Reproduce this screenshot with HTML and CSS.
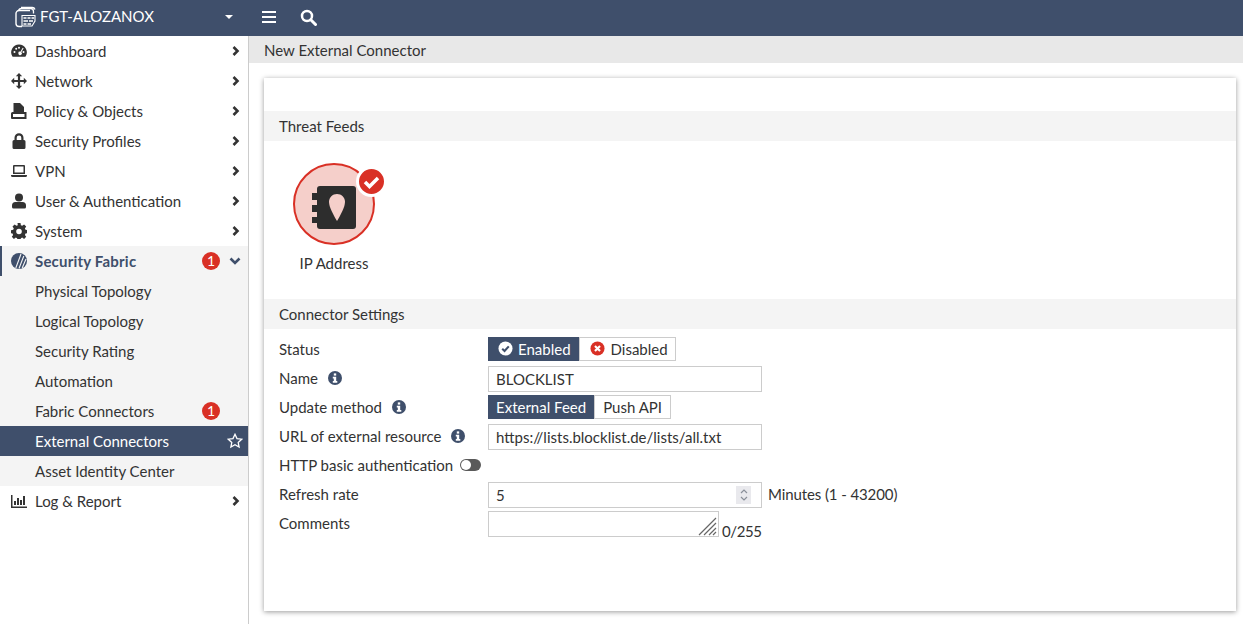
FILE: index.html
```html
<!DOCTYPE html>
<html lang="en">
<head>
  <meta charset="UTF-8" />
  <title>FGT-ALOZANOX – New External Connector</title>
  <link rel="stylesheet" href="styles.css">
</head>
<body>
  <header class="topbar">
    <div class="brand">
      <svg class="brand-logo" width="22" height="22" viewBox="0 0 22 22" fill="none" stroke="#fff">
        <path d="M6 1.500h11a3 3 0 0 1 3 2" stroke-width="1.300"/>
        <path d="M3.500 5a3 3 0 0 1 3-2.500h9a3 3 0 0 1 3 3v2" stroke-width="1.300"/>
        <path d="M7 20.500H4a3 3 0 0 1-3-3V7.500a3 3 0 0 1 3-3h11" stroke-width="1.400"/>
        <path d="M7 9.500h13v5.500l-3 5H7z" stroke-width="1.100"/>
        <path d="M8.500 12h3M12.500 12h3M16.500 12h2.500M8.500 15h4.500M14 15h4M8.500 18h3M12.500 18h3.500" stroke-width="1.500"/>
      </svg>
      <span class="brand-name">FGT-ALOZANOX</span>
      <span class="caret"></span>
    </div>
    <svg class="top-icon" width="16" height="14" viewBox="0 0 16 14" fill="#fff"><rect y="1" width="14" height="2"/><rect y="6" width="14" height="2"/><rect y="11" width="14" height="2"/></svg>
    <svg class="top-icon search" width="17" height="17" viewBox="0 0 17 17" fill="none" stroke="#fff"><circle cx="7" cy="7" r="5" stroke-width="2.500"/><path d="M10.800 10.800l4.700 4.700" stroke-width="3" stroke-linecap="round"/></svg>
  </header>

  <div class="shell">
    <nav class="sidebar">
      <a class="nav-item">
        <svg class="nav-icon" viewBox="0 0 16 16"><path fill="#333" fill-rule="evenodd" d="M8 1.500a7.800 7.800 0 0 0-6.700 11.800q.3.500.9.500h11.600q.6 0 .9-.5A7.800 7.800 0 0 0 8 1.500zM3.500 8a1 1 0 1 1 0 2 1 1 0 0 1 0-2zm1.700-3.300a1 1 0 1 1 0 2 1 1 0 0 1 0-2zm2.800-1a1 1 0 1 1 0 2 1 1 0 0 1 0-2zm3.700 1.100l.9.500-2.300 3.900a1.700 1.700 0 1 1-.9-.5zM12.500 8a1 1 0 1 1 0 2 1 1 0 0 1 0-2z"/></svg>
        <span class="nav-label">Dashboard</span>
        <svg class="chev" viewBox="0 0 10 12"><path d="M2.500 2l4 4-4 4"/></svg>
      </a>
      <a class="nav-item">
        <svg class="nav-icon" viewBox="0 0 16 16"><path fill="#333" d="M8 0l3.200 3.200H9.100v3.700h3.700V4.800L16 8l-3.200 3.200V9.100H9.100v3.700h2.100L8 16l-3.200-3.200h2.100V9.100H3.200v2.100L0 8l3.200-3.200v2.100h3.700V3.200H4.800z"/></svg>
        <span class="nav-label">Network</span>
        <svg class="chev" viewBox="0 0 10 12"><path d="M2.500 2l4 4-4 4"/></svg>
      </a>
      <a class="nav-item">
        <svg class="nav-icon" viewBox="0 0 16 16"><path fill="#333" d="M2.500 0H9l4 4v5H2.500z"/><path fill="#333" fill-rule="evenodd" d="M1.500 9H15.500v7H1a1 1 0 0 1-1-1v-4.500A1.500 1.500 0 0 1 1.500 9zM2 11v3h11.500v-3z"/></svg>
        <span class="nav-label">Policy &amp; Objects</span>
        <svg class="chev" viewBox="0 0 10 12"><path d="M2.500 2l4 4-4 4"/></svg>
      </a>
      <a class="nav-item">
        <svg class="nav-icon" viewBox="0 0 16 16"><path fill="#333" d="M3.500 7V4.800a4.500 4.500 0 0 1 9 0V7h.500A1.500 1.500 0 0 1 14.500 8.500v6A1.500 1.500 0 0 1 13 16H3a1.500 1.500 0 0 1-1.500-1.500v-6A1.500 1.500 0 0 1 3 7zm2.200 0h4.600V4.800a2.300 2.300 0 0 0-4.600 0z"/></svg>
        <span class="nav-label">Security Profiles</span>
        <svg class="chev" viewBox="0 0 10 12"><path d="M2.500 2l4 4-4 4"/></svg>
      </a>
      <a class="nav-item">
        <svg class="nav-icon" viewBox="0 0 16 16"><path fill="#333" fill-rule="evenodd" d="M3 2h10a1 1 0 0 1 1 1v8H2V3a1 1 0 0 1 1-1zm.500 1.500v6h9v-6z"/><path fill="#333" d="M0 12h16v.500A1.500 1.500 0 0 1 14.500 14h-13A1.500 1.500 0 0 1 0 12.500z"/></svg>
        <span class="nav-label">VPN</span>
        <svg class="chev" viewBox="0 0 10 12"><path d="M2.500 2l4 4-4 4"/></svg>
      </a>
      <a class="nav-item">
        <svg class="nav-icon" viewBox="0 0 16 16"><circle fill="#333" cx="8" cy="4.500" r="4"/><path fill="#333" d="M4.500 9h7A3.500 3.500 0 0 1 15 12.500V14a1.500 1.500 0 0 1-1.500 1.500h-11A1.500 1.500 0 0 1 1 14v-1.500A3.500 3.500 0 0 1 4.500 9z"/></svg>
        <span class="nav-label">User &amp; Authentication</span>
        <svg class="chev" viewBox="0 0 10 12"><path d="M2.500 2l4 4-4 4"/></svg>
      </a>
      <a class="nav-item">
        <svg class="nav-icon" viewBox="0 0 16 16"><path fill="#333" fill-rule="evenodd" d="M6.500 0h3l.4 2.200 1.300.6L13.100 1.500l2.100 2.100-1.300 1.900.6 1.300 2.200.4v3l-2.200.4-.6 1.300 1.300 1.900-2.100 2.100-1.900-1.300-1.300.6-.4 2.200h-3l-.4-2.200-1.300-.6-1.900 1.300L.8 13.800l1.300-1.900-.6-1.300L0 10.200v-3l2.200-.4.600-1.300L1.500 3.600l2.100-2.100 1.900 1.300 1.300-.6zM8 5.700a2.800 2.800 0 1 0 0 5.600 2.800 2.800 0 0 0 0-5.600z"/></svg>
        <span class="nav-label">System</span>
        <svg class="chev" viewBox="0 0 10 12"><path d="M2.500 2l4 4-4 4"/></svg>
      </a>

      <div class="nav-group">
        <a class="nav-item nav-open">
          <svg class="nav-icon" viewBox="0 0 16 16"><circle fill="#3f4f6b" cx="8" cy="8" r="8"/><path d="M4.800 15L10 1M8 15.500L12.800 3M11.200 15L15 6" stroke="#f4f4f4" stroke-width="1.100" fill="none"/></svg>
          <span class="nav-label">Security Fabric</span>
          <span class="badge">1</span>
          <svg class="chev chev-down" viewBox="0 0 12 10"><path d="M1.500 2.500L6 7l4.500-4.500"/></svg>
        </a>
        <a class="nav-sub">Physical Topology</a>
        <a class="nav-sub">Logical Topology</a>
        <a class="nav-sub">Security Rating</a>
        <a class="nav-sub">Automation</a>
        <a class="nav-sub">Fabric Connectors<span class="badge badge-sub">1</span></a>
        <a class="nav-sub nav-current">External Connectors
          <svg class="star" viewBox="0 0 16 16"><path d="M8 1.300l2 4.300 4.700.6-3.500 3.200.9 4.700L8 11.800l-4.100 2.300.9-4.700L1.300 6.200 6 5.600z"/></svg>
        </a>
        <a class="nav-sub">Asset Identity Center</a>
      </div>

      <a class="nav-item">
        <svg class="nav-icon" viewBox="0 0 16 16"><path fill="#333" d="M0 2h1.500v11.500H16V15H0z"/><path fill="#333" d="M3 8h2v4H3zM6 5h2v7H6zM9 7h2v5H9zM12 3h2v9h-2z"/></svg>
        <span class="nav-label">Log &amp; Report</span>
        <svg class="chev" viewBox="0 0 10 12"><path d="M2.500 2l4 4-4 4"/></svg>
      </a>
    </nav>

    <main class="main">
      <div class="page-title">New External Connector</div>
      <section class="card">
        <h2 class="section-head">Threat Feeds</h2>
        <div class="feeds">
          <div class="feed">
            <div class="feed-icon">
              <svg class="feed-art" width="44" height="44" viewBox="0 0 44 44">
                <path fill="#2d2d2d" d="M8 0h33a3 3 0 0 1 3 3v37a3 3 0 0 1-3 3H8a3 3 0 0 1-3-3V3a3 3 0 0 1 3-3z"/>
                <rect x="0" y="7" width="5" height="7" fill="#2d2d2d"/>
                <rect x="0" y="19" width="5" height="7" fill="#2d2d2d"/>
                <rect x="0" y="31" width="5" height="6" fill="#2d2d2d"/>
                <path fill="#f5cfca" d="M25 8c-4.500 0-8 3.500-8 8 0 5 5 14 8 19 3-5 8-14 8-19 0-4.500-3.500-8-8-8z"/>
              </svg>
              <span class="feed-check">
                <svg width="17" height="14" viewBox="0 0 17 14"><path d="M2 7l4.500 4.500L15 3" fill="none" stroke="#fff" stroke-width="3.500"/></svg>
              </span>
            </div>
            <div class="feed-name">IP Address</div>
          </div>
        </div>

        <h2 class="section-head">Connector Settings</h2>
        <form class="settings">
          <div class="row">
            <label class="row-label">Status</label>
            <div class="btn-group">
              <button type="button" class="toggle toggle-on status-btn">
                <svg class="state-icon" viewBox="0 0 16 16"><circle cx="8" cy="8" r="7.500" fill="#fff"/><path d="M4.500 8.200l2.500 2.500 4.500-5" fill="none" stroke="#3f4f6b" stroke-width="2.200"/></svg>
                Enabled
              </button>
              <button type="button" class="toggle status-btn">
                <svg class="state-icon" viewBox="0 0 16 16"><circle cx="8" cy="8" r="7.500" fill="#d93025"/><path d="M5.300 5.300l5.400 5.400M10.700 5.300l-5.400 5.400" stroke="#fff" stroke-width="2.300"/></svg>
                Disabled
              </button>
            </div>
          </div>
          <div class="row">
            <label class="row-label">Name <svg class="info" viewBox="0 0 14 14"><circle cx="7" cy="7" r="7"/><rect x="5.800" y="2.400" width="2.400" height="2.200" fill="#fff"/><path d="M4.800 5.800h3.400v4.200h1.100v1.700H4.800V10h1v-2.500h-1z" fill="#fff"/></svg></label>
            <input class="text-input" type="text" value="BLOCKLIST">
          </div>
          <div class="row">
            <label class="row-label">Update method <svg class="info" viewBox="0 0 14 14"><circle cx="7" cy="7" r="7"/><rect x="5.800" y="2.400" width="2.400" height="2.200" fill="#fff"/><path d="M4.800 5.800h3.400v4.200h1.100v1.700H4.800V10h1v-2.500h-1z" fill="#fff"/></svg></label>
            <div class="btn-group">
              <button type="button" class="toggle toggle-on">External Feed</button>
              <button type="button" class="toggle">Push API</button>
            </div>
          </div>
          <div class="row">
            <label class="row-label">URL of external resource <svg class="info" viewBox="0 0 14 14"><circle cx="7" cy="7" r="7"/><rect x="5.800" y="2.400" width="2.400" height="2.200" fill="#fff"/><path d="M4.800 5.800h3.400v4.200h1.100v1.700H4.800V10h1v-2.500h-1z" fill="#fff"/></svg></label>
            <input class="text-input" type="text" value="https://lists.blocklist.de/lists/all.txt">
          </div>
          <div class="row row-auth">
            <label class="row-label">HTTP basic authentication</label>
            <span class="switch"></span>
          </div>
          <div class="row">
            <label class="row-label">Refresh rate</label>
            <div class="number-input">
              <span>5</span>
              <span class="spinner">
                <svg width="10" height="16" viewBox="0 0 10 16" fill="none" stroke="#8a8f99" stroke-width="1.200"><path d="M2 6l3-3 3 3M2 10l3 3 3-3"/></svg>
              </span>
            </div>
            <span class="hint">Minutes (1 - 43200)</span>
          </div>
          <div class="row row-comments">
            <label class="row-label">Comments</label>
            <div class="textarea">
              <svg class="grip" width="20" height="20" viewBox="0 0 20 20" stroke="#666" stroke-width="1.200"><path d="M1 19L18 2M6 19L18 7M11 19l7-7M15 19l3-3"/></svg>
            </div>
            <span class="count">0/255</span>
          </div>
        </form>
      </section>
    </main>
  </div>
</body>
</html>
```

FILE: styles.css
```css
* {
  box-sizing: border-box;
}
html, body {
  height: 100%;
}
body {
  margin: 0;
  font-family: Lato, "Open Sans", sans-serif;
  font-size: 15px;
  color: #333;
  background: #fff;
  overflow: hidden;
  display: flex;
  flex-direction: column;
}

/* top bar */
.topbar {
  height: 36px;
  flex: none;
  padding-bottom: 2px;
  background: #3f4f6b;
  display: flex;
  align-items: center;
  color: #fff;
}
.brand {
  width: 248px;
  display: flex;
  align-items: center;
  padding-left: 15px;
}
.brand-logo {
  flex: none;
}
.brand-name {
  margin-left: 3px;
  padding-bottom: 2px;
  font-size: 15px;
}
.caret {
  margin-left: auto;
  margin-right: 15px;
  border: 4px solid transparent;
  border-top: 4px solid #fff;
  border-bottom: 0;
}
.top-icon {
  margin-left: 14px;
}
.top-icon.search {
  margin-left: 22px;
}

/* layout */
.shell {
  flex: 1;
  display: flex;
  min-height: 0;
}
.sidebar {
  width: 249px;
  flex: none;
  border-right: 1px solid #ccc;
}
.main {
  flex: 1;
  min-width: 0;
}

/* sidebar */
.nav-item, .nav-sub {
  height: 30px;
  display: flex;
  align-items: center;
  position: relative;
}
.nav-item {
  padding: 0 7px 0 11px;
}
.nav-icon {
  width: 16px;
  height: 16px;
  flex: none;
}
.nav-label {
  margin-left: 8px;
}
.chev {
  width: 10px;
  height: 12px;
  margin-left: auto;
  fill: none;
  stroke: #333;
  stroke-width: 2.6;
}
.chev-down {
  width: 12px;
  height: 10px;
  margin-left: 9px;
  stroke: #3f4f6b;
}
.nav-group {
  background: #f4f4f4;
}
.nav-open {
  font-weight: 700;
  color: #3f4f6b;
  box-shadow: inset 2px 0 0 #3f4f6b;
}
.nav-open .nav-label {
  flex: 1;
  letter-spacing: 0.2px;
}
.nav-sub {
  padding: 0 5px 0 35px;
}
.nav-current {
  background: #3f4f6b;
  color: #fff;
}
.badge {
  width: 18px;
  height: 18px;
  border-radius: 50%;
  background: #d93025;
  color: #fff;
  font-size: 14px;
  font-weight: 400;
  line-height: 18px;
  text-align: center;
  flex: none;
}
.badge-sub {
  margin-left: auto;
  margin-right: 23px;
}
.star {
  width: 16px;
  height: 16px;
  margin-left: auto;
  fill: none;
  stroke: #fff;
  stroke-width: 1.3;
}

/* content */
.page-title {
  height: 27px;
  line-height: 29px;
  padding-left: 15px;
  background: #e8e8e8;
}
.card {
  height: 533px;
  margin: 15px 7px 0 15px;
  padding-top: 33px;
  background: #fff;
  box-shadow: 0 1px 5px rgba(0, 0, 0, 0.4);
}
.section-head {
  height: 30px;
  margin: 0;
  padding-left: 15px;
  background: #f4f4f4;
  font-size: 15px;
  font-weight: 400;
  line-height: 31px;
}
.feeds {
  height: 158px;
  padding: 22px 0 0 15px;
}
.feed {
  width: 110px;
  display: flex;
  flex-direction: column;
  align-items: center;
}
.feed-icon {
  width: 82px;
  height: 82px;
  border: 2px solid #d93025;
  border-radius: 50%;
  background: #f5cfca;
  display: flex;
  align-items: center;
  justify-content: center;
  position: relative;
}
.feed-art {
  margin-top: 8px;
}
.feed-check {
  position: absolute;
  top: 1px;
  right: -14px;
  width: 25px;
  height: 25px;
  border: 3px solid #fff;
  border-radius: 50%;
  background: #d93025;
  box-sizing: content-box;
  display: flex;
  align-items: center;
  justify-content: center;
}
.feed-name {
  margin-top: 9px;
}

/* form */
.settings {
  padding: 5px 0 0 15px;
}
.row {
  height: 29px;
  display: flex;
  align-items: center;
}
.row-label {
  width: 209px;
  flex: none;
}
.info {
  width: 14px;
  height: 14px;
  margin-left: 6px;
  fill: #3f4f6b;
  vertical-align: -1px;
}
.btn-group {
  display: flex;
}
.toggle {
  height: 24px;
  padding: 0 8px;
  border: 1px solid #ccc;
  background: #fff;
  color: #333;
  font: inherit;
  display: flex;
  align-items: center;
}
.toggle-on {
  padding: 0 7px;
  background: #3f4f6b;
  border-color: #3f4f6b;
  color: #fff;
}
.status-btn {
  padding: 0 7px 0 9px;
}
.toggle + .status-btn {
  padding-left: 10px;
}
.state-icon {
  width: 15px;
  height: 15px;
  margin-right: 5px;
}
.toggle + .status-btn .state-icon {
  margin-right: 6px;
}
.text-input, .number-input, .textarea {
  width: 274px;
  height: 26px;
  margin-top: 2px;
  border: 1px solid #ccc;
  background: #fff;
}
.text-input {
  padding: 0 7px;
  font: inherit;
  color: #333;
  outline: none;
}
.number-input {
  display: flex;
  align-items: center;
  justify-content: space-between;
  padding: 0 10px 0 7px;
}
.spinner {
  width: 15px;
  height: 18px;
  background: #e9e9ed;
  display: flex;
  align-items: center;
  justify-content: center;
}
.hint {
  margin-left: 6px;
  letter-spacing: -0.1px;
}
.switch {
  width: 21px;
  height: 12px;
  margin-left: -28px;
  border-radius: 6px;
  background: #5a5a5a;
  position: relative;
}
.switch::after {
  content: "";
  position: absolute;
  left: 1px;
  top: 1px;
  width: 10px;
  height: 10px;
  border-radius: 50%;
  background: #fff;
}
.textarea {
  width: 231px;
  position: relative;
}
.grip {
  position: absolute;
  right: 0;
  bottom: 0;
}
.count {
  margin-left: 3px;
  align-self: flex-end;
  line-height: 18px;
  letter-spacing: -0.4px;
  transform: translateY(3px);
}
```
